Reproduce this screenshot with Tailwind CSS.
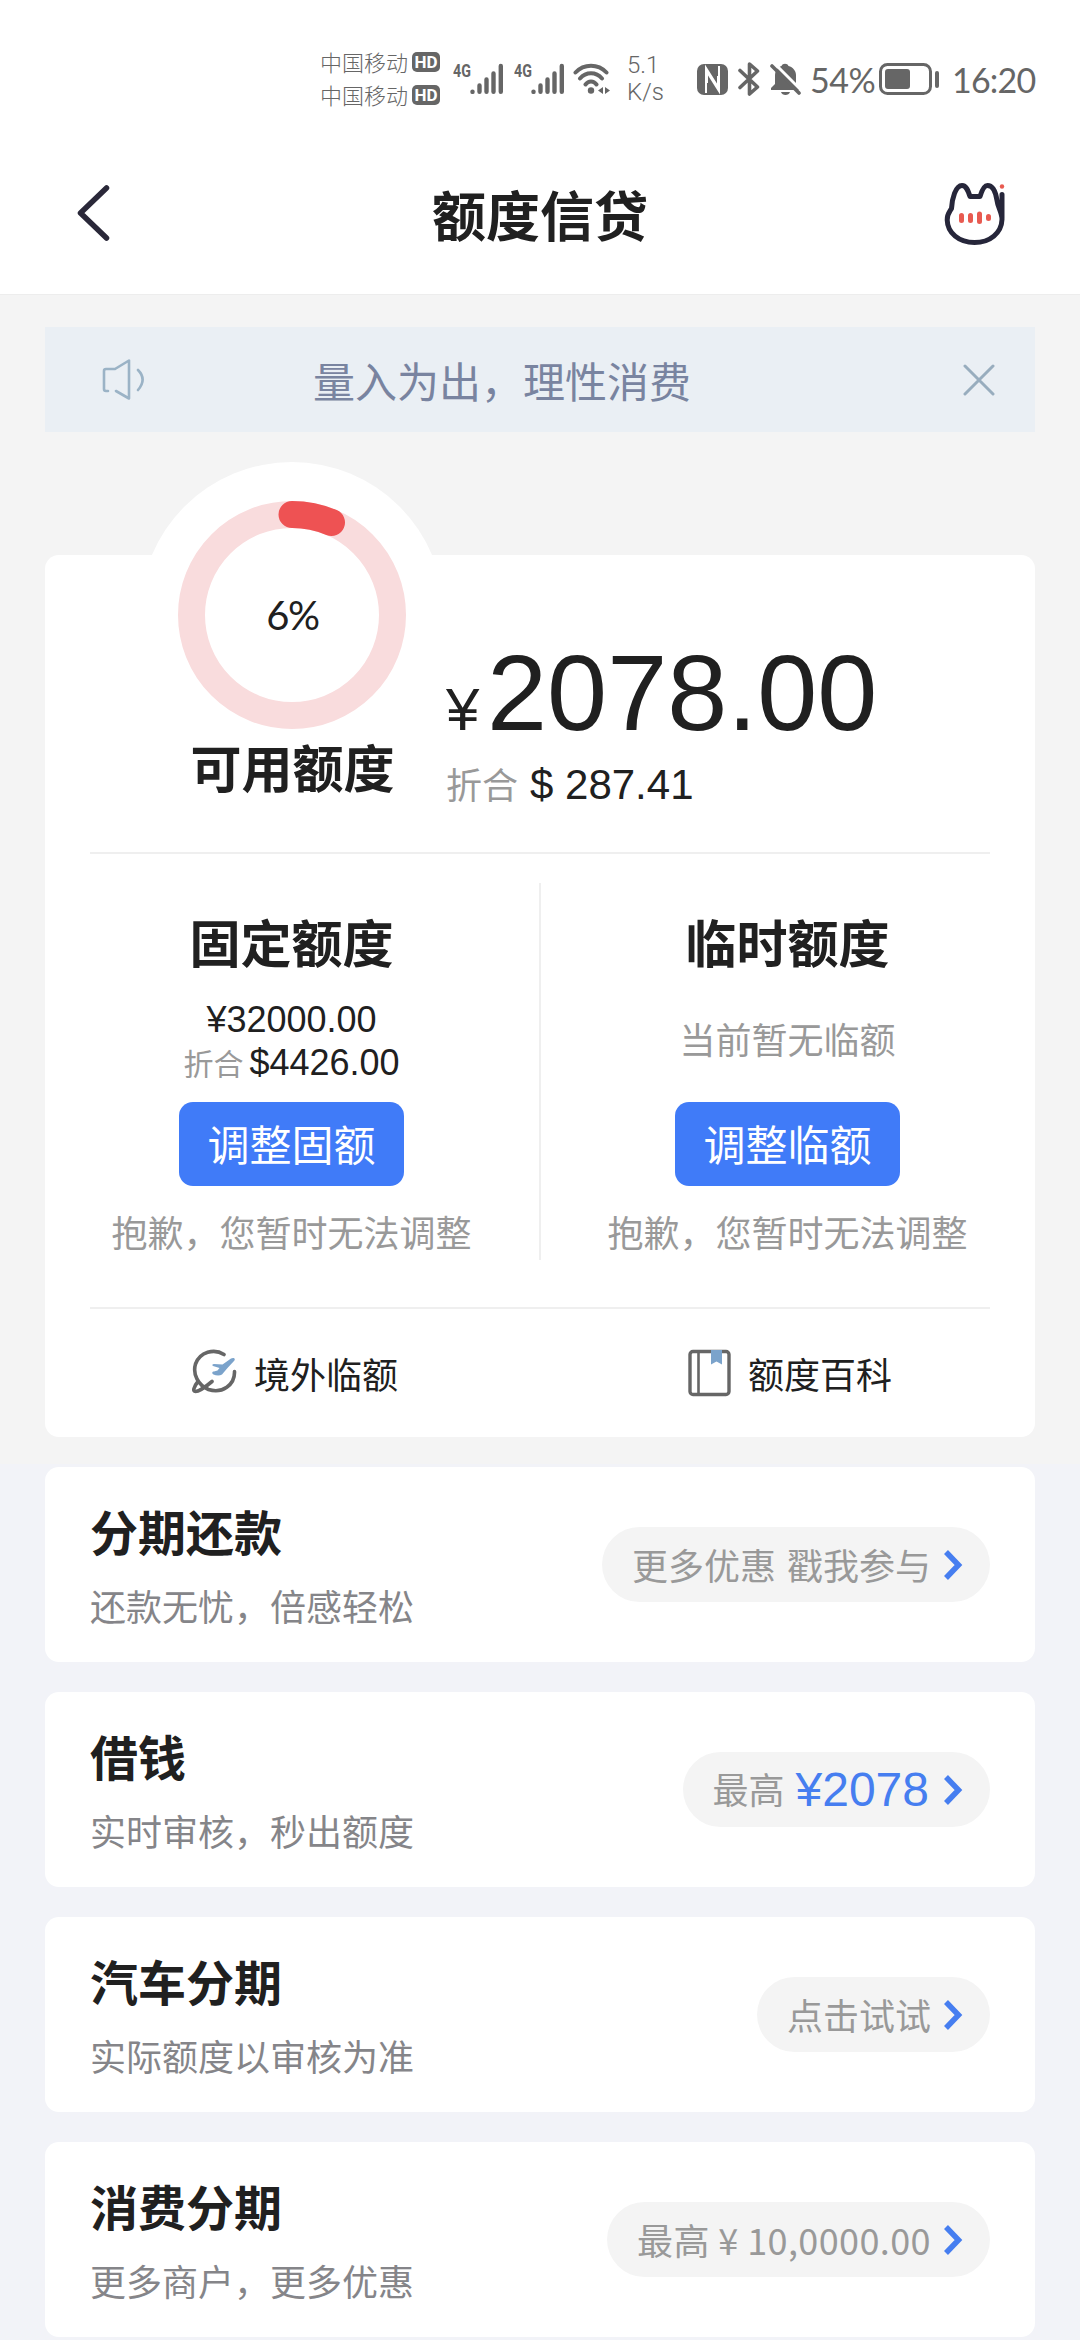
<!DOCTYPE html>
<html lang="zh-CN">
<head>
<meta charset="utf-8">
<title>额度信贷</title>
<script src="https://cdn.jsdelivr.net/npm/@tailwindcss/browser@4"></script>
</head>
<body class="w-[1080px] h-[2340px] overflow-hidden bg-[#f2f3f8] font-['Noto_Sans_CJK_SC',sans-serif] text-[#202020]">
<div class="bg-[#f4f4f4] h-[1464px]">
  <header class="bg-white h-[295px] border-b border-[#ededed]">
    <!-- status bar -->
    <div class="h-[158px] flex items-center pl-[320px] text-[#666]">
      <div class="flex flex-col w-[133px] mb-[2px]">
        <div class="flex items-center h-[33px] gap-1"><span class="text-[22px] leading-[33px] font-light w-[88px]">中国移动</span><span class="w-7 h-5 rounded-[5px] bg-[#666] text-white text-[17px] leading-5 font-bold text-center font-['Roboto',sans-serif]">HD</span></div>
        <div class="flex items-center h-[33px] gap-1"><span class="text-[22px] leading-[33px] font-light w-[88px]">中国移动</span><span class="w-7 h-5 rounded-[5px] bg-[#666] text-white text-[17px] leading-5 font-bold text-center font-['Roboto',sans-serif]">HD</span></div>
      </div>
      <div class="flex w-[61px] h-8">
        <span class="w-[17px] text-[19px] leading-4 font-bold font-['Roboto',sans-serif] origin-left scale-x-75">4G</span>
        <svg width="34" height="32" viewBox="0 0 34 32" stroke="#666" stroke-width="4.400" stroke-linecap="round"><path d="M2.500 28.600v.3M9.500 22.500v6.300M16.500 16.500v12.300M23.500 10.500v18.300M30.800 3v25.800"/></svg>
      </div>
      <div class="flex w-[59px] h-8">
        <span class="w-[17px] text-[19px] leading-4 font-bold font-['Roboto',sans-serif] origin-left scale-x-75">4G</span>
        <svg width="34" height="32" viewBox="0 0 34 32" stroke="#666" stroke-width="4.400" stroke-linecap="round"><path d="M2.500 28.600v.3M9.500 22.500v6.300M16.500 16.500v12.300M23.500 10.500v18.300M30.800 3v25.800"/></svg>
      </div>
      <svg class="mr-[16px]" width="38" height="32" viewBox="0 0 38 32" fill="none" stroke="#666" stroke-width="4" stroke-linecap="round"><path d="M2.500 9.500C11 0.500 25 0.500 33.500 9.500M7 15.500C13 8.500 23 8.500 29 15.500M12.500 21.500C15.500 17.500 20.500 17.500 23.500 21.500"/><circle cx="18" cy="27.500" r="3.200" fill="#666" stroke="none"/><path d="M30 24v7l-5-3.500zM32 24v7l5-3.500z" fill="#666" stroke="none"/></svg>
      <div class="w-[70px] text-[24px] leading-[27px] font-light font-['Roboto',sans-serif]"><div>5.1</div><div>K/s</div></div>
      <svg class="mr-[10px]" width="31" height="31" viewBox="0 0 31 31"><rect width="31" height="31" rx="7" fill="#666"/><path d="M9 29V4l12 19V12M22 2v25L10 8v11" fill="none" stroke="#fff" stroke-width="2"/></svg>
      <svg class="mr-[10px]" width="22" height="34" viewBox="0 0 22 34" fill="none" stroke="#666" stroke-width="3.600" stroke-linecap="round" stroke-linejoin="round"><path d="M2 8.500L19.500 25l-8 7V2l8 7L2 25.500"/></svg>
      <svg class="mr-[9px]" width="31" height="32" viewBox="0 0 31 32"><path d="M1 27v-2l4-4v-8C5 7 8 4 11.500 3c1-3 6-3 7 0C23 4 26 8 26 12v9l4 4v2zM11 29h9c-1 4-8 4-9 0z" fill="#666"/><path d="M3 -1l29 29" stroke="#fff" stroke-width="3"/><path d="M2 3l27 27" stroke="#666" stroke-width="3.600" stroke-linecap="round"/></svg>
      <span class="w-[69px] pt-0.5 text-[34px] leading-10 whitespace-nowrap tracking-[-0.5px] font-['Lato',sans-serif]">54%</span>
      <svg class="mr-[13px]" width="60" height="32" viewBox="0 0 60 32"><rect x="1.500" y="1.500" width="50" height="29" rx="7" fill="none" stroke="#666" stroke-width="3"/><rect x="6" y="6" width="25" height="20" rx="3" fill="#666"/><rect x="56" y="8" width="4" height="17" rx="2" fill="#666"/></svg>
      <span class="pt-0.5 text-[34px] leading-10 whitespace-nowrap tracking-[-0.8px] font-['Lato',sans-serif]">16:20</span>
    </div>
    <!-- title bar -->
    <div class="flex h-[110px] items-center justify-between pl-[76px] pr-[74px]">
      <div class="w-[62px]"><svg width="34" height="56" viewBox="0 0 34 56" fill="none" stroke="#2a2839" stroke-width="5.500" stroke-linecap="round" stroke-linejoin="round"><path d="M30.500 3L4.500 28l26 25"/></svg></div>
      <h1 class="pt-[2px] pr-[2px] text-[54px] leading-[60px] font-bold">额度信贷</h1>
      <svg width="62" height="64" viewBox="0 0 62 64" fill="none" stroke="#26263a" stroke-width="5" stroke-linecap="round" stroke-linejoin="round"><path d="M26 15.500h10C38 9 40 4.500 43.500 4.500c5 0 8 5 9.500 15 .8 7 5 12 5 19C57.500 52 46 61.500 30.500 61.500S3.500 52 3.200 39C3 33 5.500 31 7.500 27.500 8 18 11.500 4.500 18 4.500c4.500 0 6 5 8 11zM58 13.500v24"/><circle cx="58" cy="5.500" r="2.200" fill="#e85a50" stroke="none"/><path d="M17.500 34.500v5M26.500 34.500v5M35.500 33v7.500M44.500 35.500v2" stroke="#e85a50"/></svg>
    </div>
  </header>

  <div class="mx-[45px] mt-8 h-[105px] bg-[#eaeff4] flex items-center pl-[57px] pr-[40px]">
    <svg width="44" height="44" viewBox="0 0 44 44" fill="none" stroke="#9bb3c6" stroke-width="2.600" stroke-linecap="round" stroke-linejoin="round"><path d="M6 33H4c-1.500 0-2-.5-2-2V13c0-1.500.5-2 2-2h9L27 2.500v38L14 33M36 12c6 6 6 13 0 20"/></svg>
    <span class="ml-[167px] text-[42px] leading-[60px] text-[#7984a0] grow">量入为出，理性消费</span>
    <svg width="32" height="32" viewBox="0 0 32 32" stroke="#98adbe" stroke-width="3" stroke-linecap="round"><path d="M2 2l28 28M30 2L2 30"/></svg>
  </div>

  <!-- limit summary -->
  <section class="relative mx-[45px] mt-[123px] h-[882px] rounded-[14px] bg-white">
    <div class="flex h-[297px]">
      <div class="w-[401px] pl-[96px] text-center">
        <svg class="absolute left-[95px] top-[-93px]" width="304" height="304" viewBox="0 0 304 304">
          <circle cx="152" cy="152" r="152" fill="#fff"/>
          <g fill="none" stroke-width="27"><circle cx="152" cy="153" r="100.500" stroke="#f9dcdd"/><path d="M152 52.500A100.500 100.500 0 0 1 191.500 60.500" stroke="#ee5253" stroke-linecap="round"/></g>
        </svg>
        <div class="relative w-[303px] pt-[35px]">
          <div class="h-[50px] text-[40px] leading-[50px] tracking-[-1.5px] font-['Lato',sans-serif]">6%</div>
          <div class="mt-[96px] text-[51px] leading-[60px] font-bold">可用额度</div>
        </div>
      </div>
      <div class="pt-[78px] font-['Liberation_Sans',sans-serif]">
        <div class="flex items-baseline leading-[120px] h-[120px]"><span class="text-[60px] w-[41px]">¥</span><span class="text-[108px]">2078.00</span></div>
        <div class="flex items-baseline h-[60px] leading-[60px]"><span class="w-[84px] text-[36px] text-[#999] font-['Noto_Sans_CJK_SC',sans-serif]">折合</span><span class="text-[42px]">$ 287.41</span></div>
      </div>
    </div>
    <hr class="mx-[45px] border-0 h-[2px] bg-[#efefef]">
    <div class="flex h-[453px] items-start">
      <div class="w-[495px] pr-[2px] pt-[55px] flex flex-col items-center">
        <h2 class="text-[51px] leading-[64px] font-bold">固定额度</h2>
        <div class="mt-[26px] h-[84px] flex flex-col items-center font-['Liberation_Sans',sans-serif] text-[36px] leading-[42px]">
          <div>¥32000.00</div>
          <div class="flex items-baseline"><span class="mr-[6px] text-[30px] text-[#999] font-['Noto_Sans_CJK_SC',sans-serif]">折合</span>$4426.00</div>
        </div>
        <button class="mt-[19px] w-[225px] h-[84px] rounded-[14px] bg-[#407bf8] text-white text-[42px] leading-[82px] pb-[2px]">调整固额</button>
        <p class="mt-[20px] text-[36px] leading-[50px] text-[#999]">抱歉，您暂时无法调整</p>
      </div>
      <div class="self-start mt-[29px] -ml-px w-[2px] -mr-px h-[377px] bg-[#efefef]"></div>
      <div class="w-[495px] pt-[55px] flex flex-col items-center">
        <h2 class="text-[51px] leading-[64px] font-bold">临时额度</h2>
        <p class="mt-[23px] h-[84px] text-[36px] leading-[84px] text-[#999]">当前暂无临额</p>
        <button class="mt-[22px] w-[225px] h-[84px] rounded-[14px] bg-[#407bf8] text-white text-[42px] leading-[82px] pb-[2px]">调整临额</button>
        <p class="mt-[20px] text-[36px] leading-[50px] text-[#999]">抱歉，您暂时无法调整</p>
      </div>
    </div>
    <hr class="mx-[45px] border-0 h-[2px] bg-[#efefef]">
    <div class="flex h-[128px] items-center text-[36px] leading-[50px]">
      <div class="w-[495px] pl-[145px] flex items-center">
        <svg width="48" height="48" viewBox="0 0 48 48"><path d="M34 5.500C24 -1 10 3 5.500 15 2.500 25 8 36 18.500 40.500 32 45 45 36 44.500 22.500M8 32.500C3.500 38 2.500 42.500 5.500 42.500 10 42.500 16 37.500 22 32.500" fill="none" stroke="#666" stroke-width="3.600" stroke-linecap="round"/><path d="M24 15l8.500.5L41 9.500c3-1.500 5 .5 3 2.500l-6.500 7-5.500 6.500c-2.500 1.500-6 1-8.500 0-2-1-1.500-3 .5-3l3.500-1 2-2.500-6.500-2c-1.500-1-.5-2 1-2z" fill="#7ba3cb"/></svg>
        <span class="ml-4">境外临额</span>
      </div>
      <div class="w-[495px] pl-[148px] flex items-center">
        <svg width="44" height="48" viewBox="0 0 44 48" fill="none" stroke="#666"><rect x="2" y="2.500" width="39" height="43" rx="3" stroke-width="3.400"/><path d="M10.500 3v42" stroke-width="2.600"/><path d="M23 1h11v14.500l-5.500-3-5.500 3z" fill="#7ba3cb" stroke="none"/></svg>
        <span class="ml-[16px]">额度百科</span>
      </div>
    </div>
  </section>
</div>

<!-- services -->
<main class="px-[45px] pt-[3px] flex flex-col gap-[30px]">
  <section class="h-[195px] rounded-[14px] bg-white px-[45px] flex items-center justify-between">
    <div class="pt-[7px]"><h3 class="text-[48px] leading-[75px] font-bold">分期还款</h3><p class="text-[36px] leading-[75px] text-[#858589]">还款无忧，倍感轻松</p></div>
    <div class="h-[75px] rounded-full bg-[#f4f4f4] pl-[30px] pr-[27px] flex items-center text-[36px] leading-[75px] text-[#999]"><span class="[word-spacing:3px]">更多优惠 戳我参与</span><svg class="ml-[12px]" width="20" height="30" viewBox="0 0 20 30" fill="none" stroke="#467ef0" stroke-width="5.500"><path d="M3 2l12.500 13L3 28"/></svg></div>
  </section>
  <section class="h-[195px] rounded-[14px] bg-white px-[45px] flex items-center justify-between">
    <div class="pt-[7px]"><h3 class="text-[48px] leading-[75px] font-bold">借钱</h3><p class="text-[36px] leading-[75px] text-[#858589]">实时审核，秒出额度</p></div>
    <div class="h-[75px] rounded-full bg-[#f4f4f4] pl-[30px] pr-[27px] flex items-center text-[36px] leading-[75px] text-[#999]"><span class="pb-[2px]">最高</span><span class="ml-[11px] mr-[2px] text-[48px] text-[#467ef0] font-['Liberation_Sans',sans-serif]">¥2078</span><svg class="ml-[12px]" width="20" height="30" viewBox="0 0 20 30" fill="none" stroke="#467ef0" stroke-width="5.500"><path d="M3 2l12.500 13L3 28"/></svg></div>
  </section>
  <section class="h-[195px] rounded-[14px] bg-white px-[45px] flex items-center justify-between">
    <div class="pt-[7px]"><h3 class="text-[48px] leading-[75px] font-bold">汽车分期</h3><p class="text-[36px] leading-[75px] text-[#858589]">实际额度以审核为准</p></div>
    <div class="h-[75px] rounded-full bg-[#f4f4f4] pl-[30px] pr-[27px] flex items-center text-[36px] leading-[75px] text-[#999]"><span>点击试试</span><svg class="ml-[12px]" width="20" height="30" viewBox="0 0 20 30" fill="none" stroke="#467ef0" stroke-width="5.500"><path d="M3 2l12.500 13L3 28"/></svg></div>
  </section>
  <section class="h-[195px] rounded-[14px] bg-white px-[45px] flex items-center justify-between">
    <div class="pt-[7px]"><h3 class="text-[48px] leading-[75px] font-bold">消费分期</h3><p class="text-[36px] leading-[75px] text-[#858589]">更多商户，更多优惠</p></div>
    <div class="h-[75px] rounded-full bg-[#f4f4f4] pl-[30px] pr-[27px] flex items-center text-[36px] leading-[75px] text-[#999]"><span class="tracking-[0.4px]">最高 ¥ 10,0000.00</span><svg class="ml-[12px]" width="20" height="30" viewBox="0 0 20 30" fill="none" stroke="#467ef0" stroke-width="5.500"><path d="M3 2l12.500 13L3 28"/></svg></div>
  </section>
</main>
</body>
</html>
